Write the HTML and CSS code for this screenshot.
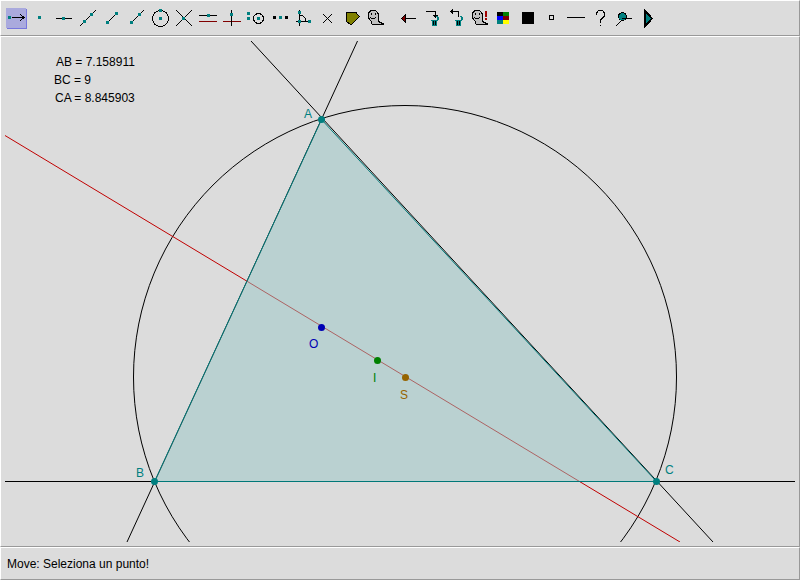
FILE: index.html
```html
<!DOCTYPE html>
<html lang="it">
<head>
<meta charset="utf-8">
<meta name="viewport" content="width=device-width, initial-scale=1">
<title>Geometria</title>
<link rel="stylesheet" href="styles.css">
</head>
<body>
<header class="panel toolbar">
  <div class="group">
    <button class="tool active" aria-label="Move"><svg class="icon"><path class="line" d="M8 11.500H20M16 8l4 3.500l-4 3.500"/><path class="pt" d="M4 10h3v3h-3z"/></svg></button>
    <button class="tool" aria-label="Point"><svg class="icon"><path class="pt" d="M10 10h3v3h-3z"/></svg></button>
    <button class="tool" aria-label="Point on line"><svg class="icon"><path class="line" d="M4 12.500h16"/><path class="pt" d="M10 11h3v3h-3z"/></svg></button>
    <button class="tool" aria-label="Line"><svg class="icon"><path class="line" d="M4 20L20 4"/><path class="pt" d="M7 14h3v3h-3zM14 7h3v3h-3z"/></svg></button>
    <button class="tool" aria-label="Segment"><svg class="icon"><path class="line" d="M7 17l9-9"/><path class="pt" d="M6 15h3v3h-3zM15 6h3v3h-3z"/></svg></button>
    <button class="tool" aria-label="Ray"><svg class="icon"><path class="line" d="M7 17L20 4"/><path class="pt" d="M6 15h3v3h-3zM14 7h3v3h-3z"/></svg></button>
    <button class="tool" aria-label="Circle"><svg class="icon"><circle class="line" cx="12.500" cy="12.500" r="8"/><path class="pt" d="M11 11h3v3h-3zM11 3h3v3h-3z"/></svg></button>
    <button class="tool" aria-label="Intersection"><svg class="icon"><path class="line" d="M4 4l16 16M4 20L20 4"/><path class="pt" d="M10 11h3v3h-3z"/></svg></button>
    <button class="tool" aria-label="Parallel"><svg class="icon"><path class="line" d="M3 9.500h18"/><path class="red" d="M3 15.500h18"/><path class="pt" d="M11 8h3v3h-3z"/></svg></button>
    <button class="tool" aria-label="Perpendicular"><svg class="icon"><path class="red" d="M3 15.500h18"/><path class="line" d="M11.500 4v16"/><path class="pt" d="M10 7h3v3h-3z"/></svg></button>
    <button class="tool" aria-label="Compass"><svg class="icon"><circle class="line" cx="14.500" cy="12.500" r="5"/><path class="pt" d="M3 6h3v3h-3zM3 11h3v3h-3zM13 11h3v3h-3z"/></svg></button>
    <button class="tool" aria-label="Midpoint"><svg class="icon"><path d="M5 10h3v3h-3zM17 10h3v3h-3z"/><path class="pt" d="M11 10h3v3h-3z"/></svg></button>
    <button class="tool" aria-label="Angle"><svg class="icon"><path class="line" d="M7.500 4v16M4 15.500h14M7.500 9.500h3l3 3v3"/><path class="pt" d="M6 5h3v3h-3zM6 14h3v3h-3zM16 14h3v3h-3z"/></svg></button>
    <button class="tool" aria-label="Fixed angle"><svg class="icon"><path class="line" d="M7 8l9 9M7 17l9-9"/></svg></button>
    <button class="tool" aria-label="Polygon"><svg class="icon"><path class="area" d="M6.500 7l1-1h8l4 4.500l-8 8h-1l-4-3z"/></svg></button>
    <button class="tool" aria-label="Hide"><svg class="icon"><path class="ghost" d="M7.500 4.500h4l2 2l1 2v6l1 2l4 1v1h-11l-1-1v-2l-2-2l-1-2v-4l1-2z"/><path d="M7 7h1v2h-1zM11 7h1v2h-1zM6 11h1v1h-1zM7 12h4v1h-4zM11 11h1v1h-1z"/></svg></button>
  </div>
  <div class="group">
    <button class="tool" aria-label="Back"><svg class="icon"><path class="line" d="M10 12.500h10"/><path class="arrow" d="M5.500 12.500l4-4v8z"/></svg></button>
    <button class="tool" aria-label="Delete"><svg class="icon"><path class="line" d="M6 5.500h9.500v6M13 9.500h5M14 10.500h3"/><path class="bin" d="M12 14h5v6h-5zM11 14h6v1h-6zM16 10h2v1h1v3h-1v1h-1v-4h-1z"/><path class="slots" d="M13.500 15v4M15.500 15v4"/></svg></button>
    <button class="tool" aria-label="Undelete"><svg class="icon"><path class="line" d="M14.500 11V5.500H6M8.500 3v5M7.500 4v3"/><path class="bin" d="M12 14h5v6h-5zM11 14h6v1h-6zM16 10h2v1h1v3h-1v1h-1v-4h-1z"/><path class="slots" d="M13.500 15v4M15.500 15v4"/></svg></button>
    <button class="tool" aria-label="Show hidden"><svg class="icon"><path class="ghost" d="M7.500 4.500h4l2 2l1 2v6l1 2l4 1v1h-11l-1-1v-2l-2-2l-1-2v-4l1-2z"/><path d="M7 7h1v2h-1zM11 7h1v2h-1zM6 11h1v1h-1zM7 12h4v1h-4zM11 11h1v1h-1z"/><path class="alert" d="M17 5h2v6h-2zM17 12h2v2h-2z"/></svg></button>
    <button class="tool" aria-label="Colour"><svg class="icon"><path d="M5 6h6v4h-6z"/><path fill="#008000" d="M11 6h6v4h-6z"/><path fill="#0000ff" d="M5 10h6v4h-6z"/><path fill="#800000" d="M11 10h6v4h-6z"/><path fill="#008080" d="M5 14h6v4h-6z"/><path fill="#ffff00" d="M11 14h6v4h-6z"/></svg></button>
    <button class="tool" aria-label="Thickness"><svg class="icon"><path d="M6 6h12v12h-12z"/></svg></button>
    <button class="tool" aria-label="Point shape"><svg class="icon"><path class="line" d="M9.500 9.500h4v4h-4z"/></svg></button>
    <button class="tool" aria-label="Line style"><svg class="icon"><path class="line" d="M3 11.500h18"/></svg></button>
    <button class="tool" aria-label="Help"><svg class="icon"><path class="line" d="M8.500 9v-2l2-2.500h4l2 2.500v3l-4 4v3M12.500 19v1"/></svg></button>
    <button class="tool" aria-label="Macro"><svg class="icon"><path class="line" d="M4 20l6-6"/><circle class="knob" cx="10.500" cy="10.500" r="4"/><path class="line" d="M10 12.500h10"/></svg></button>
    <button class="tool" aria-label="Replay"><svg class="icon"><path class="knob play" d="M9 5l7 7.500l-7 7.500z"/></svg></button>
  </div>
</header>
<main class="panel canvas">
  <svg class="drawing" viewBox="0 0 790 501" role="img" aria-label="ABC">
    <g class="lines">
      <path d="M352.500 0L122 501M246 0L708 501M0 440.500H790"/>
      <circle cx="400" cy="336" r="271.500"/>
      <path class="euler" d="M0 94.500L675 501"/>
    </g>
    <path class="triangle" d="M316.500 78.500L149.500 440.500H651.500Z"/>
    <path class="side" d="M651.500 440.500L316.500 78.500L149.500 440.500H651.500"/>
    <g class="vertex">
      <circle cx="316.500" cy="78.500" r="3.500"/><circle cx="149.500" cy="440.500" r="3.500"/><circle cx="651.500" cy="440.500" r="3.500"/>
      <text x="299" y="77">A</text><text x="131" y="436">B</text><text x="660" y="433">C</text>
    </g>
    <g class="ortho"><circle cx="316.500" cy="286.500" r="3.500"/><text x="304" y="307">O</text></g>
    <g class="incentre"><circle cx="372.500" cy="319.500" r="3.500"/><text x="368" y="341">I</text></g>
    <g class="circum"><circle cx="400.500" cy="336.500" r="3.500"/><text x="395" y="358">S</text></g>
    <text x="51" y="25">AB = 7.158911</text>
    <text x="49" y="43">BC = 9</text>
    <text x="50" y="61">CA = 8.845903</text>
  </svg>
</main>
<footer class="panel status">Move: Seleziona un punto!</footer>
</body>
</html>
```
FILE: styles.css
```css
* { box-sizing: border-box; }
body {
  margin: 0;
  min-height: 100vh;
  display: flex;
  flex-direction: column;
  background: #dcdcdc;
  color: #000;
  font: 12px/16px "Liberation Sans", Arial, sans-serif;
}
.panel {
  border: 1px solid;
  border-color: #fff #999 #999 #fff;
}
.toolbar {
  display: flex;
  gap: 8px;
  padding: 5px 3px;
}
.group { display: flex; }
.tool {
  width: 24px;
  height: 24px;
  padding: 0;
  border: 0;
  background: none;
}
.icon {
  display: block;
  width: 24px;
  height: 24px;
  shape-rendering: crispEdges;
}
.active .icon {
  background:
    linear-gradient(#aaaadd, #aaaadd) 2px 2px / 20px 20px no-repeat,
    linear-gradient(#7777dd, #7777dd) 3px 3px / 20px 20px no-repeat;
}
.line { fill: none; stroke: #000; }
.red { fill: none; stroke: #800000; }
.pt { fill: #008080; }
.area { fill: #808000; stroke: #000; }
.ghost { fill: #c0c0c0; stroke: #000; }
.arrow { fill: #800000; stroke: #000; }
.bin { fill: #008080; }
.slots { stroke: #000; }
.alert { fill: #a00000; }
.knob { fill: #008080; stroke: #000; }
.play { stroke-width: 2px; }
.canvas {
  flex: 1;
  display: flex;
  padding: 4px;
}
.drawing {
  flex: 1;
  min-width: 0;
  width: 100%;
}
.lines { fill: none; stroke: #000; }
.lines .euler { stroke: #c00000; }
.triangle { fill: rgba(152, 198, 198, 0.5); }
.side { fill: none; stroke: #007878; }
.vertex { fill: #008080; }
.ortho { fill: #0000b4; }
.incentre { fill: #008000; }
.circum { fill: #966400; }
.status { padding: 8px 6px 7px; }
```
